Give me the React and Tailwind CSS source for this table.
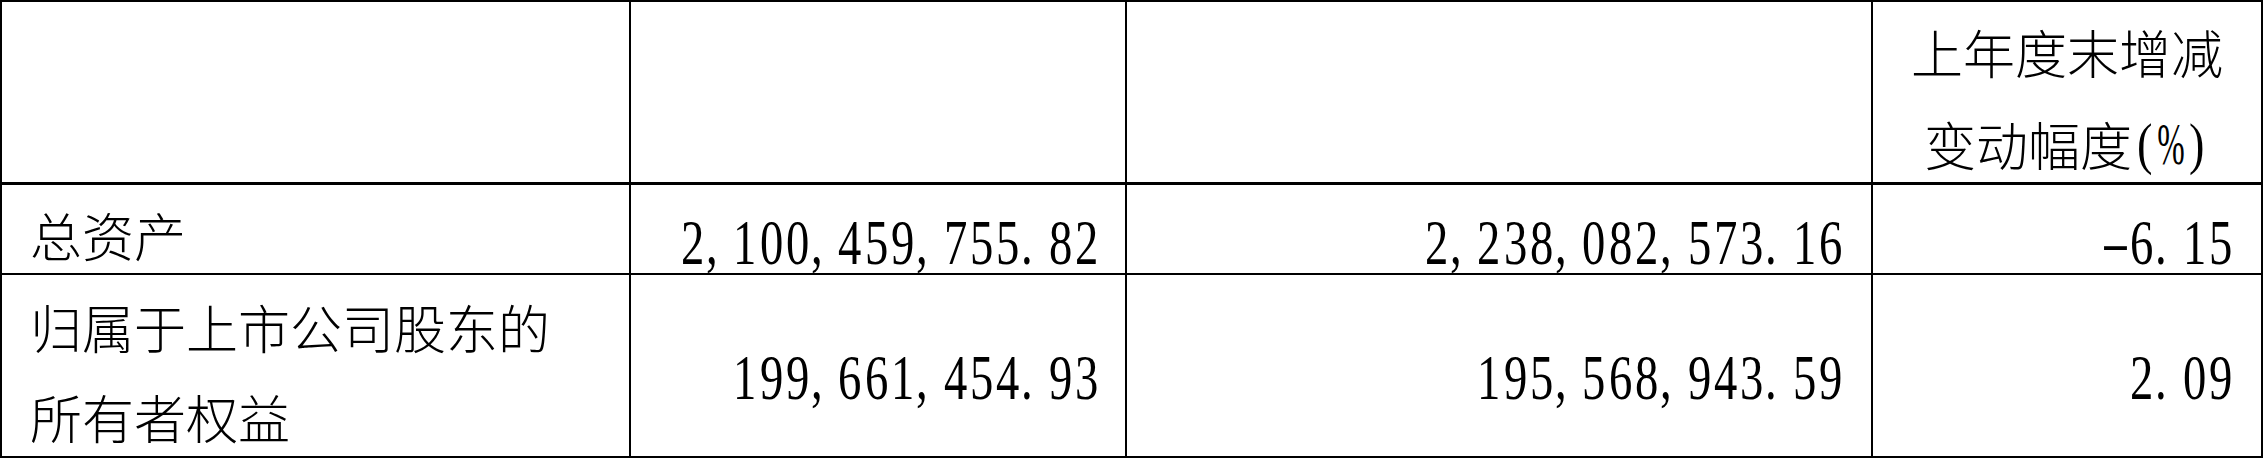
import React from "react";

const CJK = "font-['Noto_Sans_CJK_SC',sans-serif] font-light";

function Num({ text }) {
  return (
    <div className="flex font-['Liberation_Serif',serif] text-[63px] leading-[52px] text-black">
      {text.split("").map((c, i) => {
        if (c === "," || c === ".") {
          return (
            <span key={i} className="flex w-[26.3px] justify-start">
              <span className="inline-block origin-left scale-x-[0.74]">{c}</span>
            </span>
          );
        }
        if (c === "-") {
          return (
            <span key={i} className="flex w-[26.3px] justify-center">
              <span className="inline-block scale-x-[1.4] scale-y-[0.8]">{c}</span>
            </span>
          );
        }
        return (
          <span key={i} className="flex w-[26.3px] justify-center">
            <span className="inline-block scale-x-[0.74]">{c}</span>
          </span>
        );
      })}
    </div>
  );
}

function Sym({ c, cls }) {
  return (
    <span className="flex w-[26px] justify-center font-['Liberation_Serif',serif]">
      <span className={"inline-block " + cls}>{c}</span>
    </span>
  );
}

export default function App() {
  const cellR = "border-r-2 border-b-2 border-black";
  return (
    <div className="bg-white">
      <div className="grid w-[2263px] grid-cols-[629px_496px_746px_390px] grid-rows-[183px_90px_183px] border-l-2 border-t-2 border-black bg-white text-black">
        {/* header row */}
        <div className="border-r-2 border-b-[3px] border-black" />
        <div className="border-r-2 border-b-[3px] border-black" />
        <div className="border-r-2 border-b-[3px] border-black" />
        <div className={`flex flex-col items-center border-r-2 border-b-[3px] border-black pt-[4px] ${CJK} text-[52px] leading-[92px]`}>
          <div>上年度末增减</div>
          <div className="flex items-center">
            <span>变动幅度</span>
            <Sym c="(" cls="text-[58px] scale-x-[0.8]" />
            <Sym c="%" cls="text-[60px] scale-x-[0.55]" />
            <Sym c=")" cls="text-[58px] scale-x-[0.8]" />
          </div>
        </div>

        {/* row 2 */}
        <div className={`${cellR} flex items-start pl-[28px] pt-[6px] ${CJK} text-[52px] leading-[88px]`}>
          总资产
        </div>
        <div className={`${cellR} flex items-start justify-end pr-[25px] pt-[32px]`}>
          <Num text="2,100,459,755.82" />
        </div>
        <div className={`${cellR} flex items-start justify-end pr-[27px] pt-[32px]`}>
          <Num text="2,238,082,573.16" />
        </div>
        <div className={`${cellR} flex items-start justify-end pr-[27px] pt-[32px]`}>
          <Num text="-6.15" />
        </div>

        {/* row 3 */}
        <div className={`${cellR} flex flex-col items-start pl-[28px] pt-[7px] ${CJK} text-[52px] leading-[90px]`}>
          <div>归属于上市公司股东的</div>
          <div>所有者权益</div>
        </div>
        <div className={`${cellR} flex items-start justify-end pr-[25px] pt-[77px]`}>
          <Num text="199,661,454.93" />
        </div>
        <div className={`${cellR} flex items-start justify-end pr-[27px] pt-[77px]`}>
          <Num text="195,568,943.59" />
        </div>
        <div className={`${cellR} flex items-start justify-end pr-[27px] pt-[77px]`}>
          <Num text="2.09" />
        </div>
      </div>
    </div>
  );
}
